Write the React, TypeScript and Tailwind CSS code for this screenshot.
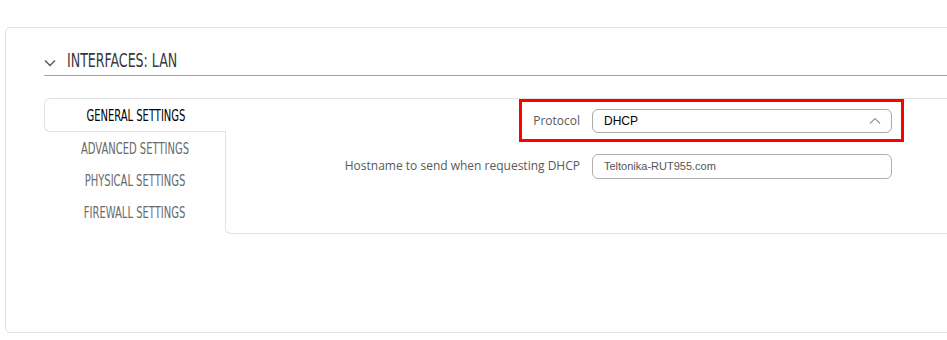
const condensed = { fontFamily: '"Liberation Sans Narrow", "DejaVu Sans Condensed", "Liberation Sans", sans-serif' };

function Tab({ label, active }: { label: string; active?: boolean }) {
  if (active) {
    return (
      <div className="relative z-10 -mr-px h-[34px] bg-white border-t border-l border-b border-[#e2e2e2] rounded-l-[6px] flex items-center justify-center">
        <span style={condensed} className="inline-block scale-x-[0.74] text-[15px] leading-none text-black pt-[3px] whitespace-nowrap">{label}</span>
      </div>
    );
  }
  return (
    <div className="h-[32px] flex items-center justify-center">
      <span style={condensed} className="inline-block scale-x-[0.74] text-[15px] leading-none text-[#6a6a6a] whitespace-nowrap">{label}</span>
    </div>
  );
}

export default function App() {
  return (
    <div className="w-[947px] h-[340px] overflow-hidden bg-white pt-[27px] pl-[5px]">
      <div className="w-[1000px] h-[306px] border border-[#e2e2e2] rounded-[5px] pl-[38px]">
        {/* Заголовок секции */}
        <div className="h-[48px] pt-[16px] border-b border-[#a3a3a3] flex items-center">
          <svg width="12" height="8" viewBox="0 0 12 8" className="mt-[6px]">
            <path d="M1 1.5 L6 6.5 L11 1.5" fill="none" stroke="#555" strokeWidth="1.3" />
          </svg>
          <span style={condensed} className="ml-[11px] inline-block origin-left scale-x-[0.7] text-[20px] leading-none text-[#383838] whitespace-nowrap">
            INTERFACES: LAN
          </span>
        </div>

        <div className="mt-[22px] flex">
          {/* Вкладки */}
          <div className="w-[181px] shrink-0">
            <Tab label="GENERAL SETTINGS" active />
            <div className="pt-[1px]">
              <Tab label="ADVANCED SETTINGS" />
              <Tab label="PHYSICAL SETTINGS" />
              <Tab label="FIREWALL SETTINGS" />
            </div>
          </div>

          {/* Панель настроек */}
          <div className="relative flex-1 h-[136px] border border-r-0 border-[#e2e2e2] rounded-bl-[6px] pt-[10px]" style={{ fontFamily: '"Open Sans", sans-serif' }}>
            <div className="flex items-center h-[24px]">
              <div className="w-[354px] text-right text-[12px] text-[#595959]">Protocol</div>
              <div className="ml-[12px] w-[300px] h-[24px] border border-[#a9a9a9] rounded-[6px] flex items-center justify-between pl-[11px] pr-[10px]">
                <span className="text-[12px] text-black" style={{ fontFamily: '"Liberation Sans", Arial, sans-serif' }}>DHCP</span>
                <svg width="12" height="8" viewBox="0 0 12 8">
                  <path d="M1 6.5 L6 1.5 L11 6.5" fill="none" stroke="#9a9a9a" strokeWidth="1.2" />
                </svg>
              </div>
            </div>
            <div className="flex items-center h-[24px] mt-[21px]">
              <div className="w-[354px] text-right text-[12px] text-[#595959] whitespace-nowrap">Hostname to send when requesting DHCP</div>
              <div className="ml-[12px] w-[300px] h-[25px] border border-[#b0b0b0] rounded-[6px] flex items-center pl-[11px]">
                <span className="text-[11px] text-[#555]" style={{ fontFamily: '"Liberation Sans", Arial, sans-serif' }}>Teltonika-RUT955.com</span>
              </div>
            </div>

            {/* Красная рамка-выделение */}
            <div className="absolute left-[293px] top-0 w-[385px] h-[43px] border-[3px] border-[#ff0000] pointer-events-none" />
          </div>
        </div>
      </div>
    </div>
  );
}
